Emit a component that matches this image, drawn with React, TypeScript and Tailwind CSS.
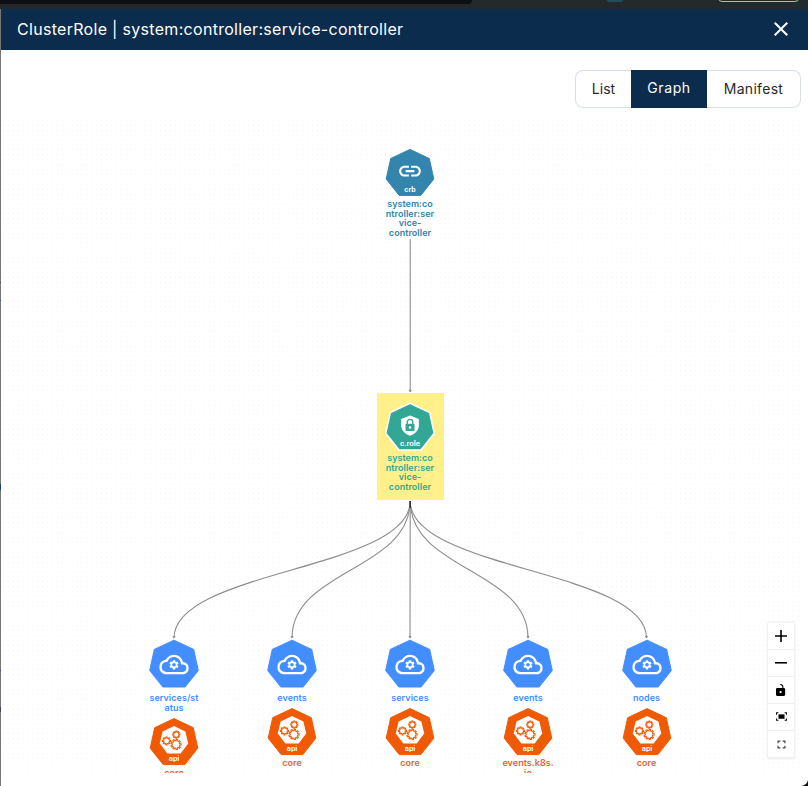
import type { ReactNode } from 'react';
import { MdLink, MdSettings, MdOutlineCloud, MdClose } from 'react-icons/md';

const heptagon = 'M25 1.6 44.3 10.7 48.8 31.2 35.8 47.6H14.2L1.2 31.2 5.7 10.7Z';

function cog(cx: number, cy: number, r: number, teeth: number) {
  const points: string[] = [];
  for (let i = 0; i < teeth; i++) {
    const a = (i / teeth) * Math.PI * 2;
    const step = (Math.PI * 2) / teeth;
    [[-0.3, 0.76], [-0.18, 1.05], [0.18, 1.05], [0.3, 0.76]].forEach(([t, k]) => {
      const b = a + t * step;
      points.push(`${(cx + Math.cos(b) * r * k).toFixed(2)},${(cy + Math.sin(b) * r * k).toFixed(2)}`);
    });
  }
  return points.join(' ');
}

function Hept({ fill, border, children }: { fill: string; border?: boolean; children: ReactNode }) {
  return (
    <svg viewBox="-0.5 -0.5 51 51" className="block h-[52px] w-[52px] shrink-0">
      <path d={heptagon} fill={fill} stroke={border ? '#fff' : fill} strokeWidth={border ? 1.6 : 1} strokeLinejoin="round" />
      {children}
    </svg>
  );
}

function IconText({ children, y }: { children: string; y: number }) {
  return (
    <text x="25" y={y} textAnchor="middle" fill="#fff" fontSize="7.8" fontWeight="600" fontFamily="Roboto, sans-serif">
      {children}
    </text>
  );
}

function Label({ lines, className }: { lines: string[]; className: string }) {
  return (
    <div className={`flex flex-col items-center text-[9px] leading-[9.7px] font-semibold tracking-[0.04px] whitespace-nowrap ${className}`}>
      {lines.map((line) => (
        <span key={line}>{line}</span>
      ))}
    </div>
  );
}

const resources = [
  { x: 174, kind: ['services/st', 'atus'], group: ['core'] },
  { x: 292, kind: ['events'], group: ['core'] },
  { x: 410, kind: ['services'], group: ['core'] },
  { x: 528, kind: ['events'], group: ['events.k8s.', 'io'] },
  { x: 646.5, kind: ['nodes'], group: ['core'] },
];

const roleLines = ['system:co', 'ntroller:ser', 'vice-', 'controller'];

function Resource({ x, kind, group }: { x: number; kind: string[]; group: string[] }) {
  return (
    <div className="absolute top-[638px] flex h-[135px] w-[62px] flex-col items-center overflow-hidden" style={{ left: x - 31 }}>
      <Hept fill="#438eff">
        <MdOutlineCloud x="10.5" y="11" size="29" color="#fff" />
        <MdSettings x="19.3" y="20.1" size="11.4" color="#fff" />
      </Hept>
      <Label lines={kind} className="mt-[3px] text-[#438eff]" />
      <div className="mt-[4.3px] flex flex-col items-center">
        <svg viewBox="0 0 50 50" className="block h-[50px] w-[50px]">
          <path d={heptagon} fill="#f05a05" stroke="#f05a05" strokeLinejoin="round" />
          <path d="M25 9 36.4 14.4 39.2 26.6 31.7 36.6H18.3L10.8 26.6 13.6 14.4Z" fill="#fff" />
          <g fill="none" stroke="#f05a05" strokeWidth="1.1">
            <polygon points={cog(17.5, 23.9, 3.8, 8)} />
            <polygon points={cog(27.3, 17.6, 3.4, 8)} />
            <polygon points={cog(27, 27.4, 4.9, 9)} />
          </g>
          <IconText y={43.6}>api</IconText>
        </svg>
        <Label lines={group} className="mt-px text-[#ec642b]" />
      </div>
    </div>
  );
}

const controls = [
  <svg key="in" viewBox="0 0 32 32" className="w-3"><path d="M32 18.133H18.133V32h-4.266V18.133H0v-4.266h13.867V0h4.266v13.867H32z" /></svg>,
  <svg key="out" viewBox="0 0 32 5" className="w-3"><path d="M0 0h32v4.2H0z" /></svg>,
  <svg key="lock" viewBox="0 0 25 32" className="h-3"><path d="M21.333 10.667H19.81V7.619C19.81 3.429 16.38 0 12.19 0c-4.114 1.828-1.37 2.133.305 2.438 1.676.305 4.42 2.59 4.42 5.181v3.048H3.047A3.056 3.056 0 000 13.714v15.238A3.056 3.056 0 003.048 32h18.285a3.056 3.056 0 003.048-3.048V13.714a3.056 3.056 0 00-3.048-3.047zM12.19 24.533a3.056 3.056 0 01-3.047-3.047 3.056 3.056 0 013.047-3.048 3.056 3.056 0 013.048 3.048 3.056 3.056 0 01-3.048 3.047z" /></svg>,
  <svg key="fit" viewBox="0 0 12 10" className="w-[11px]"><path d="M.6 3V.9h2M9.4.9h2V3M11.4 7v2.1h-2M2.6 9.1h-2V7" fill="none" stroke="#000" strokeWidth="1.1" /><path d="M2.7 2.6h6.6v4.8H2.7z" /></svg>,
  <svg key="full" viewBox="0 0 10 10" className="w-[9px]"><path d="M1.2 3.7V1.2h2.5M6.3 1.2h2.5v2.5M8.8 6.3v2.5H6.3M3.7 8.8H1.2V6.3" fill="none" stroke="#444" strokeWidth="1.3" /></svg>,
];

export default function App() {
  return (
    <div className="flex h-[786px] w-[808px] flex-col overflow-hidden bg-white font-[Inter,sans-serif]">
      <div className="relative h-[9px] shrink-0 overflow-hidden bg-[#24292b]">
        <div className="h-1 w-[472px] rounded-br-lg bg-[#0e0f14]" />
        <div className="absolute -top-2 left-[606px] h-[10px] w-[18px] rounded bg-[#244c60]" />
        <div className="absolute -top-4 left-[718px] h-[18px] w-[81px] rounded border border-[#f0a0a4]" />
      </div>
      <div className="flex min-h-0 flex-1">
        <div className="flex w-px shrink-0 flex-col bg-[#777]">
          <div className="mt-[273px] h-px bg-[#444]" />
          <div className="mt-[17px] h-px bg-[#2346a0]" />
          <div className="mt-[183px] h-[6px] bg-[#203a78]" />
          <div className="mt-[180px] h-px bg-[#304a90]" />
          <div className="mt-[36px] h-[5px] bg-[#414850]" />
        </div>
        <div className="flex min-w-0 flex-1 flex-col">
          <header className="flex h-[41px] shrink-0 items-center justify-between bg-[#0b2c4d] pr-[15px] pl-4 text-white">
            <h1 className="pb-0.5 text-[16px] tracking-[0.3px] whitespace-nowrap">ClusterRole | system:controller:service-controller</h1>
            <MdClose className="mb-0.5 h-6 w-6" />
          </header>
          <div className="flex h-[68px] shrink-0 justify-end pt-5 pr-[7px]">
            <div className="flex h-[38px] text-[14px] text-[#2a2a2a]">
              <button className="w-14 rounded-l-lg border border-r-0 border-[#d9deeb] pb-0.5">List</button>
              <button className="w-[76px] bg-[#0b2c4d] pb-[3px] tracking-[0.6px] text-white">Graph</button>
              <button className="w-[94px] rounded-r-lg border border-l-0 border-[#d9deeb] pb-0.5 tracking-[0.3px]">Manifest</button>
            </div>
          </div>
          <main className="h-[655px] bg-[radial-gradient(circle_at_center,#f3f3f3_0.5px,transparent_0.7px)] bg-[size:4.92px_4.92px]" />
        </div>
      </div>

      <svg viewBox="0 0 808 786" className="pointer-events-none absolute top-0 left-0 h-[786px] w-[808px]">
        <g fill="none" stroke="#8c8c8c" strokeWidth="1.1">
          <path d="M410.2 239V392" />
          {resources.map(({ x }) => (
            <path key={x} d={`M410.2 501C410.2 570 ${x} 570 ${x} 638`} />
          ))}
          <path d="M409 389.8 410.2 391.4 411.4 389.8" />
          {resources.map(({ x }) => (
            <path key={x} d={`M${x - 1.1} 636 ${x} 637.6 ${x + 1.1} 636`} />
          ))}
        </g>
        <path d="M410.2 501v7" stroke="#333" strokeWidth="1.6" />
        <path d="M808 780v6h-9c5 0 8-2 9-6Z" fill="#111" />
      </svg>

      <div className="absolute top-[147px] left-[380px] flex w-[60px] flex-col items-center">
        <svg viewBox="0 0 50 50" className="block h-[50px] w-[50px]">
          <path d={heptagon} transform="translate(0 .8)" fill="#3385ad" stroke="#3385ad" strokeLinejoin="round" />
          <MdLink x="12" y="11.2" size="26" color="#fff" />
          <IconText y={45}>crb</IconText>
        </svg>
        <Label lines={roleLines} className="mt-[2px] text-[#3385ad]" />
      </div>
      <div className="absolute top-[393px] left-[377px] flex h-[107px] w-[67px] flex-col items-center bg-[#fff08a] pt-2 pr-px">
        <Hept fill="#32a795" border>
          <path d="M25 13.8 33.7 17.1V23c0 5.1-3.5 8.7-8.7 10.5-5.2-1.8-8.7-5.4-8.7-10.5v-5.9Z" fill="#fff" />
          <rect x="20.6" y="21.9" width="8.8" height="7" rx="1" fill="#32a795" />
          <path d="M22.3 22.2v-2a2.7 2.7 0 0 1 5.4 0v2" fill="none" stroke="#32a795" strokeWidth="1.3" />
          <circle cx="25" cy="25.4" r="1.2" fill="#fff" />
          <IconText y={43.6}>c.role</IconText>
        </Hept>
        <Label lines={roleLines} className="text-[#32a795]" />
      </div>
      {resources.map((item) => (
        <Resource key={item.x} {...item} />
      ))}

      <div className="absolute top-[623px] left-[768px] flex w-[26px] flex-col bg-white shadow-[0_0_2px_1px_rgba(0,0,0,0.08)]">
        {controls.map((icon, i) => (
          <button key={i} className="flex h-[27px] items-center justify-center border-b border-[#eee]">{icon}</button>
        ))}
      </div>
    </div>
  );
}
